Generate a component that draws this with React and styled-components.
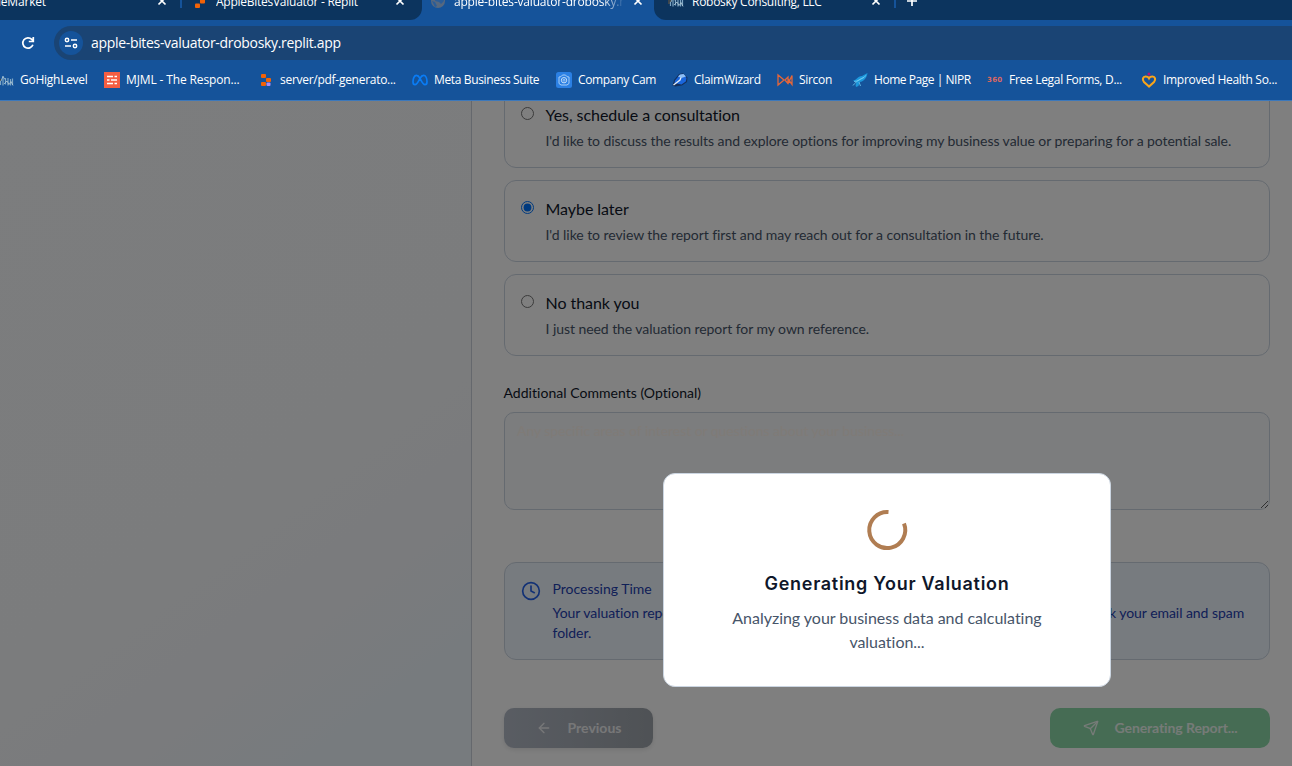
import React from "react";
import styled, { createGlobalStyle } from "styled-components";
import { ArrowLeft, Clock, Send } from "lucide-react";

const GlobalStyle = createGlobalStyle`
  * { box-sizing: border-box; }
  body { margin: 0; background: #15539a; overflow: hidden; }
  p, h2 { margin: 0; }
`;

const Window = styled.div`
  width: 1292px;
  height: 766px;
  display: flex;
  flex-direction: column;
  overflow: hidden;
  font-family: "Open Sans", "Noto Sans", sans-serif;
  font-size: 12px;
  color: #fff;
`;

const TabStrip = styled.div`
  height: 20px;
  flex: none;
  display: flex;
  overflow: hidden;
  background: #15539a;
`;

const TabGroup = styled.div`
  width: ${(p) => p.$width}px;
  height: 20px;
  display: flex;
  flex: none;
  background: ${(p) => (p.$active ? "#15539a" : "#0c345e")};
  border-radius: ${(p) => p.$corners || "0"};
`;

const Tab = styled.div`
  width: ${(p) => p.$width}px;
  height: 16px;
  margin-top: -7px;
  padding-left: ${(p) => p.$pad || 0}px;
  display: flex;
  align-items: center;
  flex: none;
`;

const TabTitle = styled.span`
  flex: 1;
  min-width: 0;
  margin-left: ${(p) => p.$gap ?? 8}px;
  line-height: 17px;
  white-space: nowrap;
  overflow: hidden;
  letter-spacing: ${(p) => p.$track || 0}px;
  ${(p) => p.$fade && "mask-image: linear-gradient(90deg, #000 84%, transparent 97%);"}
`;

const Divider = styled.i`
  width: 2px;
  height: 8px;
  flex: none;
  background: #15539a;
`;

const Spacer = styled.i`
  width: ${(p) => p.$width}px;
  flex: none;
`;

const Toolbar = styled.div`
  height: 40px;
  flex: none;
  padding: 6px 0 0 20px;
  display: flex;
  align-items: flex-start;
  background: #15539a;
`;

const ReloadSlot = styled.div`
  width: 34px;
  height: 34px;
  display: flex;
  align-items: center;
`;

const AddressBar = styled.div`
  flex: 1;
  height: 34px;
  padding-left: 5px;
  display: flex;
  align-items: center;
  gap: 8px;
  background: #1a4474;
  border-radius: 17px 0 0 17px;
  font-size: 14px;
  letter-spacing: -0.32px;
`;

const Url = styled.span`
  line-height: 20px;
`;

const SiteInfo = styled.div`
  width: 24px;
  height: 24px;
  display: grid;
  place-items: center;
  border-radius: 50%;
  background: #15539a;
`;

const BookmarkBar = styled.div`
  height: 41px;
  flex: none;
  display: flex;
  align-items: center;
  gap: 16px;
  background: #15539a;
  border-bottom: 1px solid #3c78bb;
`;

const Bookmark = styled.div`
  display: flex;
  align-items: center;
  gap: 6px;
  flex: none;
  svg { flex: none; }
  &:first-child { margin-left: -2px; }
`;

const BookmarkName = styled.span`
  width: ${(p) => p.$width}px;
  line-height: 18px;
  white-space: nowrap;
  letter-spacing: ${(p) => p.$track}px;
`;

const Page = styled.div`
  flex: 1;
  min-height: 0;
  position: relative;
  display: flex;
  overflow: hidden;
  font-family: Lato, sans-serif;
  background: #fff;
`;

const Aside = styled.div`
  width: 471px;
  flex: none;
  background: linear-gradient(143deg, #f8fafc 0%, #f7f9fb 55%, #f4f6fb 75%, #eff7fc 87%, #eff6fc 100%);
`;

const Panel = styled.main`
  flex: 1;
  padding: 0 22px 0 32px;
  background: #fff;
  border-left: 1px solid #cbd0da;
`;

const Options = styled.div`
  margin-top: -15px;
  display: flex;
  flex-direction: column;
  gap: 12px;
`;

const Option = styled.label`
  height: 82px;
  padding: 16px;
  display: flex;
  gap: 11.5px;
  border: 1px solid #cbd5e1;
  border-radius: 12px;
`;

const Radio = styled.input`
  width: 13px;
  height: 13px;
  margin: 4px 0 0;
  flex: none;
`;

const OptionTitle = styled.p`
  font-size: 16px;
  line-height: 24px;
  letter-spacing: -0.05px;
  color: #0f172a;
`;

const OptionText = styled.p`
  margin-top: 4px;
  font-size: 14px;
  line-height: 20px;
  letter-spacing: -0.06px;
  color: #475569;
`;

const FieldLabel = styled.p`
  margin: 27px 0 9px -0.5px;
  font-size: 14px;
  line-height: 20px;
  letter-spacing: 0.03px;
  color: #0f172a;
`;

const Comments = styled.textarea`
  display: block;
  width: 100%;
  height: 98px;
  padding: 8px 12px;
  border: 1px solid #cbd5e1;
  border-radius: 10px;
  background: #f8fafc;
  font: 14px/20px Lato, sans-serif;
  letter-spacing: -0.06px;
  &::placeholder { color: #fff6ee; opacity: 1; }
`;

const Notice = styled.div`
  height: 98px;
  margin-top: 52px;
  padding: 16px;
  display: flex;
  gap: 11.5px;
  border: 1px solid #cbd5e1;
  border-radius: 12px;
  background: #eff6ff;
  color: #1e40af;
  font-size: 14px;
  line-height: 20px;
  svg { flex: none; margin-top: 2px; color: #2563eb; }
`;

const NoticeText = styled.p`
  margin-top: 4px;
  letter-spacing: -0.05px;
`;

const Actions = styled.div`
  margin-top: 48px;
  display: flex;
  justify-content: space-between;
`;

const Button = styled.button`
  width: ${(p) => p.$width}px;
  height: 40px;
  padding: 0;
  display: flex;
  align-items: center;
  justify-content: center;
  gap: 16px;
  border: 0;
  border-radius: 10px;
  background: ${(p) => (p.$primary ? "#8cd8a8" : "linear-gradient(90deg, #b3bac6, #9ea4ab)")};
  box-shadow: ${(p) => (p.$primary ? "none" : "0 2px 5px rgba(0, 0, 0, 0.1)")};
  color: ${(p) => (p.$primary ? "#edf6f0" : "#eeeff1")};
  font: 700 14px/20px Lato, sans-serif;
  letter-spacing: ${(p) => (p.$primary ? -0.1 : 0)}px;
`;

const Backdrop = styled.div`
  position: absolute;
  inset: 0;
  background: rgba(0, 0, 0, 0.5);
`;

const Modal = styled.section`
  position: absolute;
  left: 663px;
  top: 372px;
  width: 448px;
  height: 214px;
  padding: 32px 33px 0;
  display: flex;
  flex-direction: column;
  align-items: center;
  border: 1px solid #cbd5e1;
  border-radius: 12px;
  background: #fff;
  text-align: center;
`;

const ModalTitle = styled.h2`
  margin-top: 16px;
  font: 600 18px/28px Inter, sans-serif;
  letter-spacing: 0.71px;
  white-space: nowrap;
  color: #0f172a;
`;

const ModalText = styled.p`
  width: 350px;
  margin-top: 8px;
  font-size: 16px;
  line-height: 24px;
  letter-spacing: -0.02px;
  color: #475569;
`;

const Close = () => (
  <svg width="16" height="16" viewBox="0 0 16 16" stroke="#fff" strokeWidth="1.7">
    <path d="M4.5 4.5l7 7m0-7l-7 7" />
  </svg>
);

const ReplitIcon = ({ accent }) => (
  <svg width="16" height="16" viewBox="0 0 16 16">
    <rect x="3" y="2" width="5" height="4" rx="1" fill="#f26207" />
    <rect x="8" y="6" width="5" height="4" rx="1" fill="#f26207" />
    <rect x="3" y="10" width="5" height="4" rx="1" fill="#f26207" />
    <rect x="8.5" y="10.5" width="4" height="3.5" rx="1" fill={accent} />
  </svg>
);

const TabReplitIcon = () => (
  <svg width="16" height="16" viewBox="0 0 16 16" fill="#f26207">
    <rect x="3" y="1" width="5" height="5" rx="1" />
    <rect x="8" y="6" width="5" height="4.5" rx="1" />
    <rect x="3" y="10.5" width="5" height="4.5" rx="1" />
  </svg>
);

const GlobeIcon = () => (
  <svg width="16" height="16" viewBox="0 0 16 16">
    <circle cx="8" cy="8" r="7" fill="#56687f" />
    <path d="M7 3l6 1 1 4-3 3-2-2-4-1zM2 8l3 1 2 4-2 1z" fill="#2a5d99" />
  </svg>
);

const SkylineIcon = () => (
  <svg width="16" height="16" viewBox="0 0 16 16" fill="none">
    <path d="M0 5.500l3 1.500v4H0z" fill="#3f474d" />
    <path d="M2.500 13V9M5 13.500V4M7.500 12.500V6M10 13.500V6M12.500 13.500V7M14.500 13V6.500" stroke="#7ea6c4" strokeWidth="1.200" />
    <path d="M3 9l2-4.500 2 3M6 12l3-3 2 3.500 2-3 2 4" stroke="#b4cbd8" strokeWidth="0.800" />
  </svg>
);

const MjmlIcon = () => (
  <svg width="16" height="16" viewBox="0 0 16 16">
    <path fill="#f45e43" d="M0 0h16v16H0z" />
    <path d="M3 4.500h6m1.500 0H13M3 8h2.500m1.500 0h6M3 11.500h6m1.500 0H13" stroke="#fff" strokeWidth="1.700" />
  </svg>
);

const MetaIcon = () => (
  <svg width="16" height="16" viewBox="0 0 16 16" fill="none" stroke="#0a7cf5" strokeWidth="1.700">
    <path d="M8 6.300C6.800 4.200 5.600 3.300 4.400 3.300 2.300 3.300 1 6.500 1 9.700c0 1.900.8 3 2 3 1.700 0 2.800-2 5-6.400 1.100-2 2.200-3 3.600-3 2.100 0 3.400 3.200 3.400 6.400 0 1.900-.8 3-2 3-1.700 0-2.800-2-5-6.400z" />
  </svg>
);

const CamIcon = () => (
  <svg width="16" height="16" viewBox="0 0 16 16" fill="none">
    <rect width="16" height="16" rx="2.500" fill="#2b80e4" />
    <path d="M3 5l2-.3L6.500 3h3L11 4.700l2 .3v6.500L11 13H5l-2-1.500z" stroke="#a9cef5" />
    <circle cx="8" cy="8.200" r="2.700" stroke="#c4ddf8" />
    <circle cx="8" cy="8.200" r="1" stroke="#c4ddf8" strokeWidth=".7" />
  </svg>
);

const WizardIcon = () => (
  <svg width="16" height="16" viewBox="0 0 16 16">
    <path d="M0.500 13.500L2 8l5-6 4-.7 4.500 4.200-.5 4.500-5 3.500-7 1z" fill="#14305c" />
    <path d="M2.500 11L3 8.500 7.500 3l4-.8L14.500 6l-.7 3.500-4.300 3z" fill="#1a66dc" />
    <path d="M6 4.500L8 2.500l3.500-.6L14 4.500 9.500 6z" fill="#8fc0f5" />
    <path d="M1.500 13L8 8l1-2.500" stroke="#e4edf6" strokeWidth="1.300" fill="none" />
  </svg>
);

const SirconIcon = () => (
  <svg width="16" height="16" viewBox="0 0 16 16" fill="none" stroke="#e4663a" strokeWidth="1.300">
    <path d="M1 3v10l6-5zM7.500 8.500L11 5v6.500M8 8l3 3.500L15 3.500v9L11 7" />
  </svg>
);

const BirdIcon = () => (
  <svg width="16" height="16" viewBox="0 0 16 16">
    <path d="M1 8.500c4-.5 4-4 9-4.500l5.500-3c-.5 4-3 8.500-8 9l-1 4-2.500 1-.5-2 1-2.500z" fill="#1c97dc" />
    <path d="M1 13.500C5 8 9 8 14 3.500M2 9.500c4 0 6-3 10-4M7 10l1.500 4" fill="none" stroke="#71cdf4" strokeWidth=".8" />
  </svg>
);

const ThreeSixty = styled.span`
  width: 16px;
  flex: none;
  color: #dc6763;
  font: 700 7px/16px "DejaVu Sans", sans-serif;
  letter-spacing: 0.3px;
`;

const HeartIcon = () => (
  <svg width="16" height="16" viewBox="0 0 16 16">
    <path d="M8 14.500L3 10C.8 7.500 2 4.500 4.500 4.500 6 4.500 7.300 5 8 6.300 8.700 5 10 4.500 11.500 4.500 14 4.500 15.200 7.500 13 10z" fill="none" stroke="#f9a51a" strokeWidth="2.100" />
    <circle cx="8" cy="2" r="1.500" fill="#b3127a" />
  </svg>
);

const bookmarks = [
  { name: "GoHighLevel", width: 68, track: -0.26, icon: <SkylineIcon /> },
  { name: "MJML - The Respon...", width: 116, track: -0.13, icon: <MjmlIcon /> },
  { name: "server/pdf-generato...", width: 116, track: -0.28, icon: <ReplitIcon accent="#a78bfa" /> },
  { name: "Meta Business Suite", width: 106, track: -0.36, icon: <MetaIcon /> },
  { name: "Company Cam", width: 78, track: -0.34, icon: <CamIcon /> },
  { name: "ClaimWizard", width: 67, track: -0.3, icon: <WizardIcon /> },
  { name: "Sircon", width: 37, track: -0.3, icon: <SirconIcon /> },
  { name: "Home Page | NIPR", width: 97, track: -0.46, icon: <BirdIcon /> },
  { name: "Free Legal Forms, D...", width: 116, track: -0.3, icon: <ThreeSixty>360</ThreeSixty> },
  { name: "Improved Health So...", width: 116, track: -0.3, icon: <HeartIcon /> },
];

const options = [
  ["Yes, schedule a consultation", "I'd like to discuss the results and explore options for improving my business value or preparing for a potential sale."],
  ["Maybe later", "I'd like to review the report first and may reach out for a consultation in the future."],
  ["No thank you", "I just need the valuation report for my own reference."],
];

export default function App() {
  return (
    <Window>
      <GlobalStyle />
      <TabStrip>
        <TabGroup $width={422} $corners="0 0 12px 0">
          <Tab $width={180}>
            <TabTitle $gap={-2} $track={-0.2}>leMarket</TabTitle>
            <Close />
            <Spacer $width={10} />
          </Tab>
          <Divider />
          <Tab $width={227} $pad={10}>
            <TabReplitIcon />
            <TabTitle $track={-0.26}>AppleBitesValuator - Replit</TabTitle>
            <Close />
            <Spacer $width={1} />
          </Tab>
        </TabGroup>
        <TabGroup $width={232} $active>
          <Tab $width={224} $pad={8}>
            <GlobeIcon />
            <TabTitle $fade $track={-0.2}>apple-bites-valuator-drobosky.replit.app</TabTitle>
            <Close />
          </Tab>
        </TabGroup>
        <TabGroup $width={638} $corners="0 0 0 12px">
          <Tab $width={240} $pad={14}>
            <SkylineIcon />
            <TabTitle $track={-0.28}>Robosky Consulting, LLC</TabTitle>
            <Close />
            <Spacer $width={10} />
          </Tab>
          <Divider />
          <Tab $width={40} $pad={8}>
            <svg width="16" height="16" viewBox="0 0 16 16" stroke="#fff" strokeWidth="1.700">
              <path d="M8 3v10M3 8h10" />
            </svg>
          </Tab>
        </TabGroup>
      </TabStrip>

      <Toolbar>
        <ReloadSlot>
          <svg width="16" height="16" viewBox="0 0 16 16" fill="none" stroke="#fff" strokeWidth="1.700">
            <path d="M12.900 9.800A5.200 5.200 0 1 1 11.800 4.400L13.300 6M13.300 2v4.500H8.800" />
          </svg>
        </ReloadSlot>
        <AddressBar>
          <SiteInfo>
            <svg width="14" height="12" viewBox="0 0 14 12" fill="none" stroke="#fff" strokeWidth="1.500">
              <circle cx="3" cy="3" r="1.700" />
              <path d="M7 3h6M1 9h6" />
              <circle cx="11" cy="9" r="1.700" />
            </svg>
          </SiteInfo>
          <Url>apple-bites-valuator-drobosky.replit.app</Url>
        </AddressBar>
      </Toolbar>

      <BookmarkBar>
        {bookmarks.map((b) => (
          <Bookmark key={b.name}>
            {b.icon}
            <BookmarkName $width={b.width} $track={b.track}>{b.name}</BookmarkName>
          </Bookmark>
        ))}
      </BookmarkBar>

      <Page>
        <Aside />
        <Panel>
          <Options>
            {options.map(([title, text], i) => (
              <Option key={title}>
                <Radio type="radio" name="consultation" defaultChecked={i === 1} />
                <div>
                  <OptionTitle>{title}</OptionTitle>
                  <OptionText>{text}</OptionText>
                </div>
              </Option>
            ))}
          </Options>
          <FieldLabel>Additional Comments (Optional)</FieldLabel>
          <Comments placeholder="Any specific areas of interest or questions about your business..." />
          <Notice>
            <Clock size={20} />
            <div>
              <p>Processing Time</p>
              <NoticeText>
                Your valuation report will be generated and sent to your email within 5 minutes. Please check your email and spam folder.
              </NoticeText>
            </div>
          </Notice>
          <Actions>
            <Button $width={149}>
              <ArrowLeft size={16} />
              Previous
            </Button>
            <Button $width={220} $primary>
              <Send size={16} />
              Generating Report...
            </Button>
          </Actions>
        </Panel>
        <Backdrop />
        <Modal>
          <svg width="48" height="48" viewBox="0 0 48 48" fill="none" stroke="#b07d52" strokeWidth="4">
            <path d="M25.500 6.100A18 18 0 1 0 41 17.500" />
          </svg>
          <ModalTitle>Generating Your Valuation</ModalTitle>
          <ModalText>Analyzing your business data and calculating valuation...</ModalText>
        </Modal>
      </Page>
    </Window>
  );
}
